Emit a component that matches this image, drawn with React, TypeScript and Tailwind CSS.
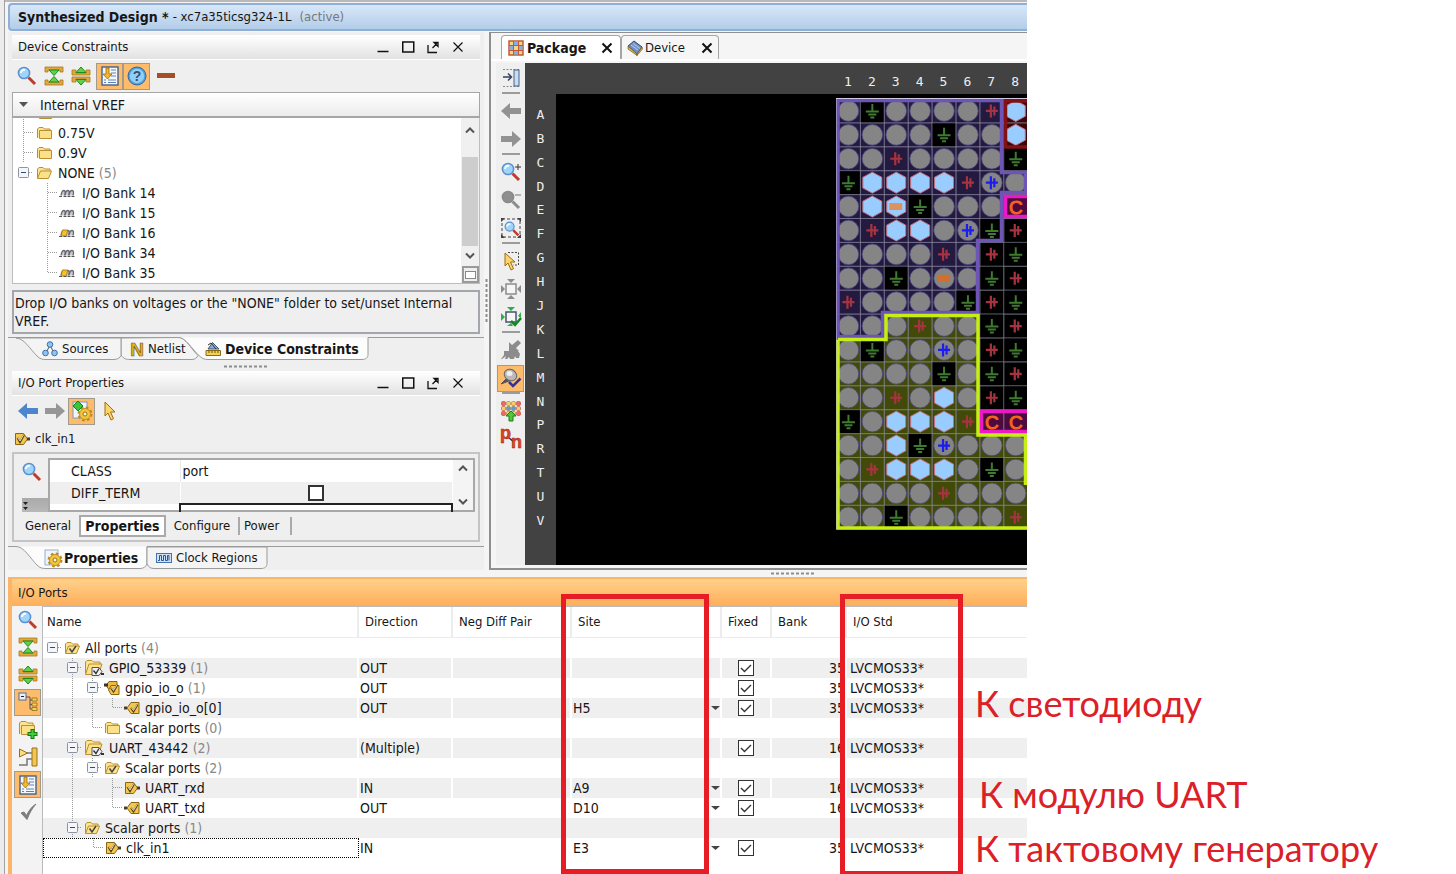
import { Fragment, useState } from "react";
import type { ReactNode } from "react";

const Svg = ({ children, w = 20, h = 20 }: { children: ReactNode; w?: number; h?: number }) => (
  <svg width={w} height={h} viewBox={`0 0 ${w} ${h}`} fill="none" className="shrink-0 overflow-visible" aria-hidden="true">
    {children}
  </svg>
);

const Lens = ({ gray = false }: { gray?: boolean }) => (
  <>
    <path d="M11.5 11.5L18 18" stroke={gray ? "#8c8c8c" : "#c23a2a"} strokeWidth="3" />
    <circle cx="7" cy="7" r="5.6" fill={gray ? "#8f8f8f" : "#9fd4fb"} stroke={gray ? "#8a8a8a" : "#5b8fd0"} strokeWidth="1.5" />
    {!gray && <path d="M4 7a3 3 0 0 1 4-3" stroke="#fff" strokeWidth="2" />}
  </>
);

const SearchIcon = () => <Svg><Lens /></Svg>;

const CollapseAllIcon = () => (
  <Svg>
    <path d="M1 1h18v5h-3V4H4v2H1zM1 19h18v-5h-3v2H4v-2H1z" fill="#e2a83a" stroke="#a87820" strokeWidth=".8" />
    <path d="M5 4h10l-5 5.500z" fill="#62d04a" stroke="#1f8a1f" />
    <path d="M5 16h10l-5-5.500z" fill="#62d04a" stroke="#1f8a1f" />
  </Svg>
);

const ExpandAllIcon = () => (
  <Svg>
    <path d="M1 4h4v3h10V4h4v5H1zM1 16h4v-3h10v3h4v-5H1z" fill="#e2a83a" stroke="#a87820" strokeWidth=".8" />
    <path d="M5 6.500h10L10 1z" fill="#62d04a" stroke="#1f8a1f" />
    <path d="M5 13.500h10L10 19z" fill="#62d04a" stroke="#1f8a1f" />
  </Svg>
);

const ScrollToIcon = () => (
  <Svg>
    <rect x="2" y="1" width="16" height="18" fill="#f4f8fd" stroke="#42618f" strokeWidth="1.4" />
    <path d="M11 4h5M11 7h5M11 10h5M4 14h2M8 14h8M4 16.500h2M8 16.500h8" stroke="#5b82b8" strokeWidth="1.2" />
    <path d="M6 2h3v6h3l-4.500 5L3 8h3z" fill="#f3b830" stroke="#976812" strokeWidth=".8" />
  </Svg>
);

const HelpIcon = () => (
  <Svg>
    <circle cx="10" cy="10" r="9" fill="#4f9fdc" stroke="#35689c" />
    <circle cx="10" cy="10" r="7.200" fill="#8fd0fa" />
    <text x="10" y="15" textAnchor="middle" fontSize="14" fontWeight="bold" fill="#36506e" fontFamily="Liberation Sans">?</text>
  </Svg>
);

const MinusIcon = () => <Svg><rect x="1" y="7" width="18" height="5" fill="#a54e26" /></Svg>;

const FolderIcon = ({ open = false, check = false }: { open?: boolean; check?: boolean }) => (
  <Svg w={16} h={14}>
    <path d="M1.500 12V3L3 1.500h4L8.500 3H14v2" fill="#fbe594" stroke="#b98f32" />
    {open ? (
      <path d="M1.500 12.500L4.500 5h11l-3 7.500z" fill="#fbe28a" stroke="#b98f32" />
    ) : (
      <path d="M3.500 4.500h12v8h-12z" fill="#fbe28a" stroke="#b98f32" />
    )}
    {check && <path d="M5.500 7.500l2.500 3.500 4-6" stroke="#444" strokeWidth="1.500" />}
  </Svg>
);

const InterfaceIcon = () => (
  <Svg w={20} h={18}>
    <path d="M1.500 14V3L3 1.500h5L9.500 3H16v2" fill="#fbe594" stroke="#b98f32" />
    <path d="M1.500 15.500L5 5h13l-2 6v4.500z" fill="#fbe28a" stroke="#b98f32" />
    <path d="M8 8.500h7l3 4-3 4H8z" fill="#f1f1f1" stroke="#555" />
    <path d="M9.500 11.500l2.500 3 3-5" stroke="#333" strokeWidth="1.400" />
    <path d="M17 15h3" stroke="#333" strokeWidth="2" />
  </Svg>
);

const PortIcon = ({ out = false, bus = false }: { out?: boolean; bus?: boolean }) => (
  <Svg w={16} h={16}>
    {bus && <path d="M5 1.500h8v8H5L2 5.500z" fill="#efb93c" stroke="#8a6410" />}
    {bus && <path d="M0 5h4" stroke="#333" strokeWidth="3" />}
    {out ? (
      <path d={bus ? "M7 5.500h8v9H7L4.500 10z" : "M7 2.500h8v11H7L3 8z"} fill="#f4c650" stroke="#8a6410" />
    ) : (
      <path d="M1.500 2.500h8l4 5.500-4 5.500h-8z" fill="#f4c650" stroke="#8a6410" />
    )}
    {!bus && <path d={out ? "M0 8h3" : "M13 8h3"} stroke="#4a4020" strokeWidth="3" />}
    <path d={out ? "M7 8l2.500 3.500 4-7" : "M3.500 7l2.500 4 4-7"} stroke="#5a420e" strokeWidth="2" />
    <path d={out ? "M7.500 8l2 2.500 3.500-6" : "M4 7l2 3 3.500-6"} stroke="#fff" strokeWidth=".8" />
  </Svg>
);

const BankIcon = ({ used }: { used: boolean }) => (
  <Svg w={16} h={10}>
    <path d="M2 7.500C2.500 4 3.500 2.500 5 2.500s1.500 2 .500 5M6 7.500c.500-3.500 1.500-5 3-5s1.500 2 .500 5M10 7.500c.500-3.500 1.500-5 3-5s2 2 1 5" fill="#c9c9d0" stroke="#66666e" strokeWidth="1.300" />
    {used && <path d="M2 8l1.500-6h5l-1 6z" fill="#f7c12c" stroke="#a07414" strokeWidth=".8" />}
    <path d="M0 8.500h3M4.500 8.500h3M8.500 8.500h3M12.500 8.500h3" stroke="#555" />
  </Svg>
);

const SourcesIcon = () => (
  <Svg w={16} h={16}>
    <path d="M8 4L4 12M8 4l4 8" stroke="#555" />
    <circle cx="8" cy="3.500" r="2.800" fill="#8cc4f2" stroke="#3d6da8" />
    <circle cx="3.500" cy="12" r="2.800" fill="#8cc4f2" stroke="#3d6da8" />
    <circle cx="12.500" cy="12" r="2.800" fill="#8cc4f2" stroke="#3d6da8" />
  </Svg>
);

const NetlistIcon = () => (
  <Svg w={16} h={16}>
    <text x="8" y="15" textAnchor="middle" fontSize="19" fontWeight="bold" fill="#e6b422" stroke="#7c5c10" strokeWidth=".7" fontFamily="Liberation Sans">N</text>
  </Svg>
);

const ConstraintsIcon = () => (
  <Svg w={16} h={16}>
    <path d="M1 9.500h14.500v5H1z" fill="#f5cf4e" stroke="#8d6b16" />
    <path d="M4 9.500V12M7 9.500V12M10 9.500V12M13 9.500V12" stroke="#6d5210" />
    <path d="M3 8L7.500 1.500 14 8z" fill="#8ea9d0" stroke="#3e5578" />
    <path d="M3 4l3-2 5 6" stroke="#333" />
  </Svg>
);

const ArrowIcon = ({ right = false, color }: { right?: boolean; color: string }) => (
  <Svg>
    <path d={right ? "M0 7h11V2l9 8-9 8v-5H0z" : "M20 7H9V2l-9 8 9 8v-5h11z"} fill={color} />
  </Svg>
);

const Gear = () => (
  <>
    <circle cx="12" cy="12" r="6.200" stroke="#b98a1c" strokeWidth="2.500" strokeDasharray="2.600 2.270" />
    <circle cx="12" cy="12" r="5.500" fill="#f2c53d" stroke="#c4941f" />
    <circle cx="12" cy="12" r="2" fill="#fff8dc" stroke="#9c7114" />
  </>
);

const AutoPropsIcon = () => (
  <Svg>
    <rect x="1" y="1" width="14" height="16" fill="#eef5fc" stroke="#7f9cc0" />
    <g transform="translate(1 1)"><Gear /></g>
    <path d="M6 0l5 5-5 5-5-5z" fill="#39c43c" stroke="#1a801c" />
  </Svg>
);

const PropsIcon = () => (
  <Svg w={18} h={18}>
    <rect x="1" y="1" width="13" height="15" fill="#eef5fc" stroke="#9ab0cc" />
    <g transform="translate(-1 -1)"><Gear /></g>
  </Svg>
);

const ClockRegionsIcon = () => (
  <Svg w={16} h={12}>
    <rect x=".5" y="1.500" width="15" height="9" fill="#cfe2f8" stroke="#4472b0" />
    <path d="M2 8.500h1.500v-5h2v5h2v-5h2v5h2v-5H13v5" stroke="#2c5590" />
  </Svg>
);

const CursorIcon = () => (
  <Svg>
    <path d="M6 1v14l3-3 3 7 2.500-1.300L11.500 11H16z" fill="#fbd569" stroke="#a06d12" />
  </Svg>
);

const HierarchyIcon = () => (
  <Svg>
    <rect x="1" y="1" width="7" height="7" fill="#e6f0fc" stroke="#4b6ea6" />
    <path d="M3 4.500h3" stroke="#223" />
    <path d="M8 5h4v12M12 8h2M12 12.500h2M12 17h2" stroke="#555" />
    <path d="M14 6h5v3h-5zM14 11h5v3h-5zM14 15.500h5v3h-5z" fill="#f7cf62" stroke="#8d6b16" strokeWidth=".8" />
  </Svg>
);

const AddFolderIcon = () => (
  <Svg>
    <path d="M1.500 14V3L3 1.500h5L9.500 3H15v2" fill="#fbe594" stroke="#b98f32" />
    <path d="M3.500 5.500h13v9h-13z" fill="#fbe28a" stroke="#b98f32" />
    <path d="M14.500 9v10M9.500 14h10" stroke="#127a16" strokeWidth="4" />
    <path d="M14.500 10v8M10.500 14h8" stroke="#45cc3c" strokeWidth="2" />
  </Svg>
);

const PlacePortsIcon = () => (
  <Svg>
    <path d="M14 1h5v18h-5z" fill="#f4c650" stroke="#97701a" />
    <path d="M1.500 2l8 4-8 4z" fill="#f9dc80" stroke="#97701a" />
    <path d="M9 6h5M1 18h8v-6h5" stroke="#777" strokeWidth="1.500" />
  </Svg>
);

const CheckIcon = () => (
  <Svg><path d="M3 11l3-1 2.500 3.500C11 8 14 4.500 18 2c-4 4.500-6.500 9-9 15.500z" fill="#7d7d7d" stroke="#7d7d7d" /></Svg>
);

const DockIcon = () => (
  <Svg>
    <path d="M2 1.500h17M2 18.500h17" stroke="#888" strokeDasharray="2 1.500" />
    <rect x="13" y="2" width="5" height="16" fill="#c9dcf3" stroke="#48638c" />
    <path d="M2 9h8M7 5.500L10.500 9 7 12.500" stroke="#33465f" strokeWidth="1.500" />
  </Svg>
);

const ZoomInIcon = () => <Svg><Lens /><path d="M14 5h6M17 2v6" stroke="#333" /></Svg>;
const ZoomOutIcon = () => <Svg><Lens gray /><path d="M14 5h6" stroke="#777" /></Svg>;
const ZoomFitIcon = () => (
  <Svg>
    <rect x="1" y="1" width="18" height="18" stroke="#444" strokeDasharray="3 2" />
    <path d="M0 4V0h4zM16 0h4v4zM0 16v4h4zM20 16v4h-4z" fill="#444" />
    <g transform="translate(3 3) scale(.8)"><Lens /></g>
  </Svg>
);

const SelectAreaIcon = () => (
  <Svg>
    <path d="M7 1.500h10.500V14H12" stroke="#444" strokeDasharray="2 1.500" />
    <path d="M4 2v13l3-3 3 7 2.500-1.300L9.500 11H14z" fill="#fbd569" stroke="#a06d12" />
  </Svg>
);

const FitSelectionIcon = ({ green = false }: { green?: boolean }) => (
  <Svg>
    <rect x="5" y="5" width="10" height="10" fill="#f5f5f5" stroke={green ? "#44566e" : "#8c8c8c"} strokeWidth="1.500" />
    <path d={green ? "M6 0h8l-4 4zM6 19h6l-2-3zM0 6v8l4-4zM20 5v6l-3-2z" : "M6 0h8l-4 4zM6 20h8l-4-4zM0 6v8l4-4zM20 6v8l-4-4z"} fill={green ? "#2fae4a" : "#8c8c8c"} />
    {green && <path d="M10 14l4 4 6-7" stroke="#0d8a1a" strokeWidth="2.500" />}
  </Svg>
);

const BrushIcon = () => (
  <Svg>
    <path d="M17 0l3 3-5 5 3 3H8V2l3 3z" fill="#8c8c8c" />
    <path d="M3 11h14l2 3-1 4h-3l-1-2-1 3H9l-1-2-2 2H4l1-3-4 3H0l3-4z" fill="#8c8c8c" />
  </Svg>
);

const PinCheckIcon = () => (
  <Svg>
    <path d="M6 10l-6 6 8-3z" fill="#555" stroke="#555" />
    <ellipse cx="9.500" cy="7" rx="6.500" ry="5.500" transform="rotate(35 9.500 7)" fill="#b9b9b9" stroke="#666" />
    <ellipse cx="8.500" cy="5.500" rx="3" ry="2.500" fill="#eee" />
    <path d="M8 14l4 4 7.500-7.500" stroke="#35319a" strokeWidth="2.500" />
  </Svg>
);

const PinMatrixIcon = () => (
  <Svg>
    {[0, 1, 2].map((r) =>
      [0, 1, 2, 3].map((c) => (
        <rect key={`${r}${c}`} x={c * 5 + 0.5} y={r * 5 + 0.5} width="4" height="4" rx="1.200"
          fill={c === 0 || c === 3 ? (r === 1 ? "#f6cf6a" : "#ef6a60") : r === 1 ? "#5a9ae6" : "#f6cf6a"}
          stroke={c === 0 || c === 3 ? "#b94138" : "#a08030"} strokeWidth=".6" />
      ))
    )}
    <path d="M10 10l5 5h-3v5H8v-5H5z" fill="#4fc83c" stroke="#1c7d1c" />
  </Svg>
);

const DiffPairIcon = () => (
  <Svg w={22} h={22}>
    <path d="M8 9l6 5" stroke="#333" strokeWidth="1.500" />
    <text x="0" y="11" fontSize="18" fontWeight="bold" fill="#e2421f" stroke="#9c2810" strokeWidth=".5" fontFamily="Liberation Sans">p</text>
    <text x="11" y="20" fontSize="18" fontWeight="bold" fill="#e2421f" stroke="#9c2810" strokeWidth=".5" fontFamily="Liberation Sans">n</text>
  </Svg>
);

const PackageIcon = () => (
  <Svg w={16} h={16}>
    <rect x="1" y="1" width="14" height="14" fill="#f8d48a" stroke="#c4582e" strokeWidth="1.500" />
    <path d="M5 1.500h6v4H5zM1.500 5.500H5v5H1.500zM11 5.500h3.500v5H11zM5 10.500h6v4H5z" fill="#7fb0ea" />
    <path d="M1 5.500h14M1 10.500h14M5.500 1v14M10.500 1v14" stroke="#c4582e" />
  </Svg>
);

const DeviceIcon = () => (
  <Svg w={16} h={16}>
    <path d="M1 6l6-5 8 6-5 7z" fill="#6f90c4" stroke="#33486c" />
    <path d="M1 6v3l9 6.500V14zM10 14v1.500L15.500 9 15 7z" fill="#d9b452" stroke="#6d5a1c" strokeWidth=".7" />
    <path d="M4 5l7 5M6 3.500l7 5" stroke="#b9cdec" />
  </Svg>
);

const CloseGlyph = ({ bold = false }: { bold?: boolean }) => (
  <Svg w={12} h={12}><path d="M1.500 1.500l9 9M10.500 1.500l-9 9" stroke="#111" strokeWidth={bold ? 2 : 1.2} /></Svg>
);

const ToolButton = ({ label, active = false, children }: { label: string; active?: boolean; children: ReactNode }) => (
  <button
    type="button"
    aria-label={label}
    className={`flex h-[27px] w-[27px] shrink-0 items-center justify-center border ${
      active ? "border-[#a39a8c] bg-[#fdbb6c]" : "border-transparent"
    }`}
  >
    {children}
  </button>
);

const PanelHeader = ({ title }: { title: string }) => (
  <div className="mx-1 flex h-[25px] items-center border-b border-white bg-linear-to-b from-white to-[#e2e2e2] pl-[6px] pr-4">
    <h2 className="grow">{title}</h2>
    <div className="flex gap-[13px]">
      <button type="button" aria-label="Minimize"><Svg w={12} h={12}><path d="M.5 10.500h11" stroke="#111" strokeWidth="1.500" /></Svg></button>
      <button type="button" aria-label="Maximize"><Svg w={12} h={12}><rect x=".75" y="1" width="11" height="10" stroke="#111" strokeWidth="1.500" /></Svg></button>
      <button type="button" aria-label="Float"><Svg w={12} h={12}><path d="M1 4v7.500h9M5.500 7L10 2.500M7 1.500h4v4z" stroke="#111" strokeWidth="1.300" /></Svg></button>
      <button type="button" aria-label="Close"><CloseGlyph /></button>
    </div>
  </div>
);

const Chevron = ({ up = false }: { up?: boolean }) => (
  <Svg w={10} h={8}><path d={up ? "M1 6.500l4-4 4 4" : "M1 1.500l4 4 4-4"} stroke="#555" strokeWidth="2" /></Svg>
);

// One 20px guide cell per character: "-" expander, "|" line, "T" tee, "L" elbow, "." nothing
const Guides = ({ pattern }: { pattern: string }) => (
  <>
    {pattern.split("").map((g, i) => (
      <Svg key={i}>
        {(g === "|" || g === "T") && <path d="M10.500 0v20" stroke="#999" strokeDasharray="1 1" />}
        {g === "L" && <path d="M10.500 0v10" stroke="#999" strokeDasharray="1 1" />}
        {(g === "T" || g === "L") && <path d="M11 9.500h9" stroke="#999" strokeDasharray="1 1" />}
        {g === "-" && (
          <>
            {i > 0 && <path d="M10.500 0v20" stroke="#999" strokeDasharray="1 1" />}
            <path d="M16 9.500h4" stroke="#999" strokeDasharray="1 1" />
            <rect x="5.500" y="4.500" width="10" height="10" rx="1" fill="#f4f6f9" stroke="#8b93a0" />
            <path d="M8 9.500h5" stroke="#2c4a86" />
          </>
        )}
      </Svg>
    ))}
  </>
);

const Splitter = () => (
  <svg width="44" height="3" aria-hidden="true">
    <path d="M0 1.500h44" stroke="#8d8d8d" strokeWidth="2" strokeDasharray="3 2" />
  </svg>
);

const banks = [
  { name: "I/O Bank 14", used: false },
  { name: "I/O Bank 15", used: false },
  { name: "I/O Bank 16", used: true },
  { name: "I/O Bank 34", used: false },
  { name: "I/O Bank 35", used: true },
];

const DeviceConstraints = () => (
  <section>
    <PanelHeader title="Device Constraints" />
    <div className="flex h-8 items-center pl-[5px]">
      <ToolButton label="Search"><SearchIcon /></ToolButton>
      <ToolButton label="Collapse All"><CollapseAllIcon /></ToolButton>
      <ToolButton label="Expand All"><ExpandAllIcon /></ToolButton>
      <div className="mx-[2px] flex">
        <ToolButton label="Scroll to selected" active><ScrollToIcon /></ToolButton>
        <ToolButton label="Show help" active><HelpIcon /></ToolButton>
      </div>
      <ToolButton label="Remove"><MinusIcon /></ToolButton>
    </div>
    <div className="mx-1 flex h-[26px] items-center gap-3 border border-b-2 border-[#a6a6a6] bg-linear-to-b from-white to-[#ececec] pl-[6px] text-[14px]">
      <Svg w={9} h={6}><path d="M0 0h9L4.500 5z" fill="#555" /></Svg>
      Internal VREF
    </div>
    <div className="mx-1 flex h-[166px] border border-t-0 border-[#bdbdbd] bg-white text-[14px]">
      <ul className="flex grow flex-col justify-end overflow-hidden">
        <li className="flex h-5 shrink-0 items-center"><Guides pattern="T" /><span className="pl-[3px]"><FolderIcon /></span></li>
        {["0.75V", "0.9V"].map((v) => (
          <li key={v} className="flex h-5 shrink-0 items-center">
            <Guides pattern="T" /><span className="pl-[3px] pr-[6px]"><FolderIcon /></span>{v}
          </li>
        ))}
        <li className="flex h-5 shrink-0 items-center">
          <Guides pattern="-" /><span className="pl-[3px] pr-[6px]"><FolderIcon open /></span>
          NONE&nbsp;<span className="text-[#888]">(5)</span>
        </li>
        {banks.map((b, i) => (
          <li key={b.name} className="flex h-5 shrink-0 items-center pl-6">
            <Guides pattern={i === banks.length - 1 ? "L" : "T"} />
            <span className="pl-[2px] pr-[7px]"><BankIcon used={b.used} /></span>{b.name}
          </li>
        ))}
      </ul>
      <div className="flex w-[18px] flex-col items-center bg-[#f0f0f0]">
        <div className="flex h-[39px] items-center pb-4"><Chevron up /></div>
        <div className="w-4 grow bg-[#cdcdcd]" />
        <div className="flex h-5 items-center"><Chevron /></div>
        <button type="button" aria-label="Show overview" className="flex h-[17px] w-[17px] items-center justify-center border-2 border-[#9a9a9a] bg-[#eee]">
          <span className="h-2 w-[11px] border border-[#888] bg-white" />
        </button>
      </div>
    </div>
    <p className="mx-1 mt-[6px] h-11 border-2 border-[#a3a7ab] bg-[#efefef] pl-px pt-[2px] text-[14px] leading-[18px]">
      Drop I/O banks on voltages or the "NONE" folder to set/unset Internal VREF.
    </p>
    <div className="relative mt-[3px] flex h-6 pl-[34px]">
      <svg width="476" height="24" fill="none" className="absolute left-0 top-0" aria-hidden="true">
        <path d="M0 .5h170c8 0 14 12 21 18 3 3 5 4 9 4h154c4 0 6-2 6-5V.5h116" fill="#fcfcfc" stroke="#9b9b9b" />
        <path d="M113 1v17c3 4 5 4.500 9 4.500h62c3 0 5-2 6-4C183 12 178 .5 170 .5z" fill="#f4f4f4" stroke="#9b9b9b" />
        <path d="M8 1c8 0 14 11 21 18 3 3 5 3.500 9 3.500h68c4 0 6-2 7-4V1z" fill="#f4f4f4" stroke="#9b9b9b" />
      </svg>
      <button type="button" className="relative flex w-[87px] items-center gap-1"><SourcesIcon />Sources</button>
      <button type="button" className="relative flex w-[76px] items-center gap-[3px]"><NetlistIcon />Netlist</button>
      <button type="button" className="relative flex items-center gap-1 text-[14px] font-bold"><ConstraintsIcon />Device Constraints</button>
    </div>
  </section>
);

const PortProperties = () => (
  <section>
    <PanelHeader title="I/O Port Properties" />
    <div className="flex h-[30px] items-center pl-[6px]">
      <ToolButton label="Back"><ArrowIcon color="#4d86cc" /></ToolButton>
      <ToolButton label="Forward"><ArrowIcon right color="#969696" /></ToolButton>
      <ToolButton label="Automatically update" active><AutoPropsIcon /></ToolButton>
      <ToolButton label="Select"><CursorIcon /></ToolButton>
    </div>
    <div className="flex h-[26px] items-center gap-[5px] pl-[6px]"><PortIcon />clk_in1</div>
    <div className="mx-1 flex h-[90px] flex-col border-2 border-[#c4c4c4] pl-2 pr-[3px] pt-1">
      <div className="flex h-[54px] overflow-hidden">
        <div className="flex w-[26px] flex-col justify-between pt-1">
          <SearchIcon />
          <div className="-ml-1 h-[14px] w-[30px] bg-linear-to-b from-[#aaa] to-[#b8b8b8] pl-[5px] pt-1">
            <Svg w={6} h={9}><path d="M0 0h5L2.500 3zM0 5h5L2.500 8z" fill="#222" /></Svg>
          </div>
        </div>
        <div className="flex grow border-2 border-[#a8a8a8] bg-white">
          <table className="grow table-fixed self-start text-[14px]">
            <tbody>
              <tr className="h-[22px]">
                <th scope="row" className="w-[130px] pl-[21px] text-left font-normal">CLASS</th>
                <td className="border-l border-[#e8e8e8] pl-[2px]">port</td>
              </tr>
              <tr className="h-[22px] bg-[#efefef]">
                <th scope="row" className="pl-[21px] text-left font-normal"><label htmlFor="diff-term">DIFF_TERM</label></th>
                <td className="border-l border-white">
                  <input id="diff-term" type="checkbox" className="mx-auto block h-4 w-4 appearance-none border-2 border-[#333] bg-white" />
                </td>
              </tr>
              <tr className="h-2"><th scope="row" /><td className="border-2 border-b-0 border-[#222]" /></tr>
            </tbody>
          </table>
          <div className="flex w-5 flex-col items-center justify-between bg-[#f4f4f4] pb-1 pt-1"><Chevron up /><Chevron /></div>
        </div>
      </div>
      <div className="flex grow items-center pl-px">
        <button type="button" className="w-[56px] pl-[2px] text-left">General</button>
        <button type="button" className="h-[22px] w-[87px] border-2 border-[#aaa] bg-white text-[14px] font-bold">Properties</button>
        <button type="button" className="h-[18px] w-[74px] border-r-2 border-[#aaa]">Configure</button>
        <button type="button" className="h-[18px] w-[52px] border-r-2 border-[#aaa] pl-1 text-left">Power</button>
      </div>
    </div>
    <div className="relative mt-1 flex h-6 pl-9">
      <svg width="476" height="24" fill="none" className="absolute left-0 top-0" aria-hidden="true">
        <path d="M0 .5h8C16 .5 22 12 29 19c3 3 5 3.500 9 3.500h94c4 0 6-2 7-5V.5h337" fill="#fcfcfc" stroke="#9b9b9b" />
        <path d="M139 1v17c2 3.500 4 4.500 7 4.500h107c4 0 6-2 6-5V1z" fill="#f4f4f4" stroke="#9b9b9b" />
      </svg>
      <button type="button" className="relative flex w-[112px] items-center gap-[2px] text-[14px] font-bold"><PropsIcon />Properties</button>
      <button type="button" className="relative flex items-center gap-1"><ClockRegionsIcon />Clock Regions</button>
    </div>
  </section>
);

// o pin, g ground, r supply, h bonded pin, b bank supply, m/n fixed port, c config
const rows: [string, string][] = [
  ["A", "ogoooorh"], ["B", "oooogooh"], ["C", "ooroooog"], ["D", "ghhhhrbo"], ["E", "ohmgoooc"], ["F", "orhhobgr"],
  ["G", "oooororg"], ["H", "oogonogr"], ["J", "roooogrg"], ["K", "oooroogr"], ["L", "ogooborg"], ["M", "oooogogr"],
  ["N", "oorohorg"], ["P", "gohhhrcc"], ["R", "oohgbooo"], ["T", "orhhhogo"], ["U", "oooorooo"], ["V", "oogoooor"],
];
const PITCH = 23.9;

const Pin = ({ kind }: { kind: string }) => (
  <>
    {"obn".includes(kind) && <circle r="10.300" fill="#858585" stroke="#4b4580" strokeWidth=".8" />}
    {"hm".includes(kind) && <path d="M0-10.500l9.500 5.200v10.600L0 10.500l-9.500-5.200v-10.600z" fill="#99ccff" stroke="#c07080" />}
    {kind === "g" && <path d="M0-7v7M-6.500 .5H6.500M-4 3.500h8M-2 6.500h4" stroke="#3f7a30" strokeWidth="2" />}
    {(kind === "r" || kind === "b") && (
      <path d="M-6 0H6M-1-6.500v13M2.500-4.500v9" stroke={kind === "r" ? "#a83340" : "#1c1cf0"} strokeWidth="2.200" />
    )}
    {"mn".includes(kind) && <rect x="-7" y="-3.500" width="13" height="7" fill={kind === "m" ? "#dc925f" : "#d0702c"} />}
    {kind === "c" && (
      <text y="7" textAnchor="middle" fontSize="19" fill="#f5641c" stroke="#f5641c" fontFamily="Liberation Sans">C</text>
    )}
  </>
);

const PackageMap = () => (
  <svg width="191" height="432" className="block" role="img" aria-label="Package pins">
    <rect width="191" height="432" fill="#000" />
    <g transform="translate(.5 1)">
      <path d="M0 0h167.300v71.700h23.900v23.900h-23.900v47.800h-23.900v71.700H47.800V239H0z" fill="#241a40" />
      <path d="M47.800 215.100h95.600v119.500h47.800V430.200H0V239h47.800z" fill="#414a08" />
      <rect x="167.300" width="24" height="47.800" fill="#3c0708" />
      <path d="M167.300 95.600h24v23.900h-24zM143.400 310.700h48v23.900h-48z" fill="#4c0a3e" />
      {rows.map(([name, pins], r) =>
        pins.split("").map((kind, c) => (
          <Fragment key={name + c}>
            <rect x={c * PITCH} y={r * PITCH} width={PITCH} height={PITCH} fill={kind === "g" ? "#000" : "none"} stroke="#8a8aa0" strokeOpacity=".5" />
            <g transform={`translate(${(c + 0.5) * PITCH} ${(r + 0.5) * PITCH})`}><Pin kind={kind} /></g>
          </Fragment>
        ))
      )}
      <g fill="none" strokeWidth="3.500">
        <path d="M193 2h-24v46h24" stroke="#801216" />
        <path d="M193 97.500h-24v20h24M193 312.500h-48v20h48" stroke="#ea18c6" />
        <path d="M1.500 1.500h163.500v72h24v20h-24v48h-24v72H46v24H1.500z" stroke="#6c55b4" />
        <path d="M1.500 240.500h48v-24h92v119.500h47.500v50M191 429H1.500V240.500" stroke="#c5ee14" />
      </g>
      <path d="M-.5 430V-.5H191" stroke="#cfc9e4" fill="none" />
    </g>
  </svg>
);

const Rule = () => <div className="flex h-[5px] items-start justify-center"><div className="h-[2px] w-[18px] bg-[#9b9b9b]" /></div>;

const ToolSlot = ({ children }: { children: ReactNode }) => <div className="flex h-7 items-center justify-center">{children}</div>;

const PackageView = () => (
  <section className="flex min-w-0 grow flex-col border-b-2 border-l-2 border-t border-[#8f8f8f]">
    <div className="flex h-[28px] items-end border-b-2 border-white pl-[10px]">
      <div className="flex h-6 w-[120px] items-center rounded-t border border-b-0 border-[#a5a5a5] bg-white pl-[6px] text-[14px] font-bold">
        <PackageIcon /><span className="grow pl-[3px]">Package</span>
        <button type="button" aria-label="Close Package" className="mr-[7px]"><CloseGlyph bold /></button>
      </div>
      <div className="flex h-6 w-[98px] items-center rounded-t border border-b-0 border-[#a5a5a5] bg-[#f6f6f6] pl-[5px]">
        <DeviceIcon /><span className="grow pl-[2px]">Device</span>
        <button type="button" aria-label="Close Device" className="mr-[5px]"><CloseGlyph bold /></button>
      </div>
    </div>
    <div className="mb-[3px] ml-[5px] mt-[2px] flex grow">
      <div className="flex w-[29px] flex-col bg-[#efefef] pt-px">
        <ToolSlot><ToolButton label="Dock"><DockIcon /></ToolButton></ToolSlot>
        <Rule />
        <ToolSlot><ToolButton label="Previous"><ArrowIcon color="#929292" /></ToolButton></ToolSlot>
        <ToolSlot><ToolButton label="Next"><ArrowIcon right color="#929292" /></ToolButton></ToolSlot>
        <Rule />
        <ToolSlot><ToolButton label="Zoom In"><ZoomInIcon /></ToolButton></ToolSlot>
        <ToolSlot><ToolButton label="Zoom Out"><ZoomOutIcon /></ToolButton></ToolSlot>
        <ToolSlot><ToolButton label="Zoom Fit"><ZoomFitIcon /></ToolButton></ToolSlot>
        <Rule />
        <ToolSlot><ToolButton label="Select Area"><SelectAreaIcon /></ToolButton></ToolSlot>
        <ToolSlot><ToolButton label="Fit Selection"><FitSelectionIcon /></ToolButton></ToolSlot>
        <ToolSlot><ToolButton label="Autofit Selection"><FitSelectionIcon green /></ToolButton></ToolSlot>
        <Rule />
        <ToolSlot><ToolButton label="Place Ports"><BrushIcon /></ToolButton></ToolSlot>
        <ToolSlot><ToolButton label="Check Rules" active><PinCheckIcon /></ToolButton></ToolSlot>
        <Rule />
        <ToolSlot><ToolButton label="Pin Ranges"><PinMatrixIcon /></ToolButton></ToolSlot>
        <ToolSlot><ToolButton label="Differential Pairs"><DiffPairIcon /></ToolButton></ToolSlot>
      </div>
      <div className="flex min-w-0 grow bg-[#424242] font-['DejaVu_Sans_Mono',monospace] text-[13px] text-[#eee]">
        <ul className="mt-10 grid h-[430px] w-[31px] shrink-0 auto-rows-fr">
          {rows.map(([name]) => <li key={name} className="flex items-center justify-center">{name}</li>)}
        </ul>
        <div className="flex grow flex-col">
          <ul className="ml-auto grid h-[31px] w-[191px] grid-cols-8 pt-1 leading-[30px]">
            {[1, 2, 3, 4, 5, 6, 7, 8].map((n) => <li key={n} className="text-center">{n}</li>)}
          </ul>
          <div className="flex grow justify-end bg-black pt-1"><PackageMap /></div>
        </div>
      </div>
    </div>
  </section>
);

type Port = {
  guides: string; icon: ReactNode; name: string; count?: number; dir?: string; site?: string; bank?: string;
};

const ports: Port[] = [
  { guides: "-", icon: <FolderIcon open check />, name: "All ports", count: 4 },
  { guides: ".-", icon: <InterfaceIcon />, name: "GPIO_53339", count: 1, dir: "OUT", bank: "35" },
  { guides: ".|-", icon: <PortIcon out bus />, name: "gpio_io_o", count: 1, dir: "OUT", bank: "35" },
  { guides: ".||L", icon: <PortIcon out />, name: "gpio_io_o[0]", dir: "OUT", site: "H5", bank: "35" },
  { guides: ".|L", icon: <FolderIcon />, name: "Scalar ports", count: 0 },
  { guides: ".-", icon: <InterfaceIcon />, name: "UART_43442", count: 2, dir: "(Multiple)", bank: "16" },
  { guides: ".|-", icon: <FolderIcon open check />, name: "Scalar ports", count: 2 },
  { guides: ".|.T", icon: <PortIcon />, name: "UART_rxd", dir: "IN", site: "A9", bank: "16" },
  { guides: ".|.L", icon: <PortIcon out />, name: "UART_txd", dir: "OUT", site: "D10", bank: "16" },
  { guides: ".-", icon: <FolderIcon open check />, name: "Scalar ports", count: 1 },
  { guides: "..L", icon: <PortIcon />, name: "clk_in1", dir: "IN", site: "E3", bank: "35" },
];

const FixedBox = ({ name }: { name: string }) => {
  const [fixed, setFixed] = useState(true);
  return (
    <span className="mx-auto grid h-4 w-4">
      <input
        type="checkbox"
        aria-label={`${name} fixed`}
        checked={fixed}
        onChange={(e) => setFixed(e.target.checked)}
        className="col-start-1 row-start-1 h-4 w-4 appearance-none border border-[#333] bg-white"
      />
      {fixed && (
        <svg viewBox="0 0 16 16" fill="none" className="pointer-events-none col-start-1 row-start-1" aria-hidden="true">
          <path d="M3 8l3.500 3.500L13 5" stroke="#333" strokeWidth="1.400" />
        </svg>
      )}
    </span>
  );
};

const headings = ["Name", "Direction", "Neg Diff Pair", "Site", "Fixed", "Bank", "I/O Std"];

const PortsTable = () => (
  <table className="w-full table-fixed border-separate border-spacing-0 bg-white">
    <colgroup>
      <col className="w-[316px]" /><col className="w-[94px]" /><col className="w-[119px]" /><col className="w-[150px]" />
      <col className="w-[50px]" /><col className="w-[75px]" /><col />
    </colgroup>
    <thead>
      <tr className="h-[31px]">
        {headings.map((h) => (
          <th key={h} className="border-b border-r-2 border-[#ececec] pl-[6px] text-left font-normal last:border-r-0 first:pl-1">{h}</th>
        ))}
      </tr>
    </thead>
    <tbody className="text-[14px]">
      {ports.map((p, i) => {
        const cell = `h-5 p-0 ${i % 2 ? "bg-[#efefef]" : "bg-white"} ${p.dir ? "border-r-2 border-white last:border-r-0" : ""}`;
        const selected = i === ports.length - 1;
        return (
          <tr key={i} className="h-5">
            <td className={selected ? "h-5 border border-dotted border-black p-0" : cell}>
              <div className={`-ml-px flex items-center whitespace-nowrap ${selected ? "h-[18px]" : "h-5"}`}>
                <Guides pattern={p.guides} />
                <span className="min-w-4 pl-[2px] pr-[5px]">{p.icon}</span>
                {p.name}
                {p.count !== undefined && <span className="pl-1 text-[#888]">({p.count})</span>}
              </div>
            </td>
            <td className={`${cell} pl-px`}>{p.dir}</td>
            <td className={cell} />
            <td className={`${cell} pl-px`}>
              {p.site && (
                <div className="flex h-5 items-center">
                  <select aria-label={`${p.name} site`} defaultValue={p.site} className="grow appearance-none bg-transparent">
                    <option>{p.site}</option>
                  </select>
                  <Svg w={9} h={5}><path d="M0 0h9L4.500 4z" fill="#444" /></Svg>
                </div>
              )}
            </td>
            <td className={cell}>{p.bank && <FixedBox name={p.name} />}</td>
            <td className={`${cell} text-right`}>{p.bank}</td>
            <td className={`${cell} pl-[3px]`}>{p.bank && "LVCMOS33*"}</td>
          </tr>
        );
      })}
    </tbody>
  </table>
);

const IoPorts = () => (
  <section className="relative flex grow flex-col border-l-4 border-t-2 border-[#fcb567] bg-[#f3f3f3]">
    <h2 className="flex h-[27px] items-center bg-linear-to-b from-[#ffd18a] to-[#feae59] pl-[6px]">I/O Ports</h2>
    <div className="flex grow">
      <div className="grid h-[220px] w-[30px] shrink-0 auto-rows-fr items-center pl-[2px]">
        <ToolButton label="Search"><SearchIcon /></ToolButton>
        <ToolButton label="Collapse All"><CollapseAllIcon /></ToolButton>
        <ToolButton label="Expand All"><ExpandAllIcon /></ToolButton>
        <ToolButton label="Group by interface" active><HierarchyIcon /></ToolButton>
        <ToolButton label="Create interface"><AddFolderIcon /></ToolButton>
        <ToolButton label="Place ports"><PlacePortsIcon /></ToolButton>
        <ToolButton label="Scroll to selected" active><ScrollToIcon /></ToolButton>
        <ToolButton label="Commit"><CheckIcon /></ToolButton>
      </div>
      <div className="min-w-0 grow border-l border-t border-[#bbb] bg-white"><PortsTable /></div>
    </div>
    <div className="pointer-events-none absolute left-[549px] top-[15px] h-[280px] w-[148px] border-[5px] border-[#e81c24]" />
    <div className="pointer-events-none absolute left-[828px] top-[15px] h-[282px] w-[123px] border-[5px] border-[#e81c24]" />
    <div className="absolute left-[963px] top-[97px] whitespace-nowrap font-[Lato,sans-serif] text-[36px] leading-[54px] text-[#dc2028]">
      <p>К светодиоду</p>
      <p className="mt-[37px] pl-1">К модулю UART</p>
      <p>К тактовому генератору</p>
    </div>
  </section>
);

export default function App() {
  return (
    <div className="flex h-screen overflow-hidden bg-white pr-[429px] font-['DejaVu_Sans_Condensed','DejaVu_Sans',sans-serif] text-[13px] leading-4 text-[#161616]">
      <div className="w-[5px] shrink-0 border-r border-[#a2a2a2] bg-[#ececec]" />
      <main className="flex min-w-0 grow flex-col border-t-2 border-[#b9b9b9] bg-[#f5f5f5] pl-[3px]">
        <h1 className="mt-px flex h-7 shrink-0 items-center rounded-l border-2 border-r-0 border-[#8fb0d6] bg-linear-to-b from-[#d8e7f8] to-[#b3cde9] pl-2">
          <span className="text-[14px] font-bold">Synthesized Design *</span>
          <span className="pl-1">- xc7a35ticsg324-1L</span>
          <span className="pl-2 text-[#777]">(active)</span>
        </h1>
        <div className="mt-px flex shrink-0">
          <div className="w-[476px] shrink-0 bg-[#efefef] pt-[3px]">
            <DeviceConstraints />
            <div className="flex h-[10px] items-center justify-center"><Splitter /></div>
            <PortProperties />
          </div>
          <div className="flex w-[5px] shrink-0 items-center justify-center">
            <svg width="3" height="44" aria-hidden="true"><path d="M1.500 0v44" stroke="#8d8d8d" strokeWidth="2" strokeDasharray="3 2" /></svg>
          </div>
          <PackageView />
        </div>
        <div className="flex h-[7px] shrink-0 items-center justify-center pl-[550px]"><Splitter /></div>
        <IoPorts />
      </main>
    </div>
  );
}
